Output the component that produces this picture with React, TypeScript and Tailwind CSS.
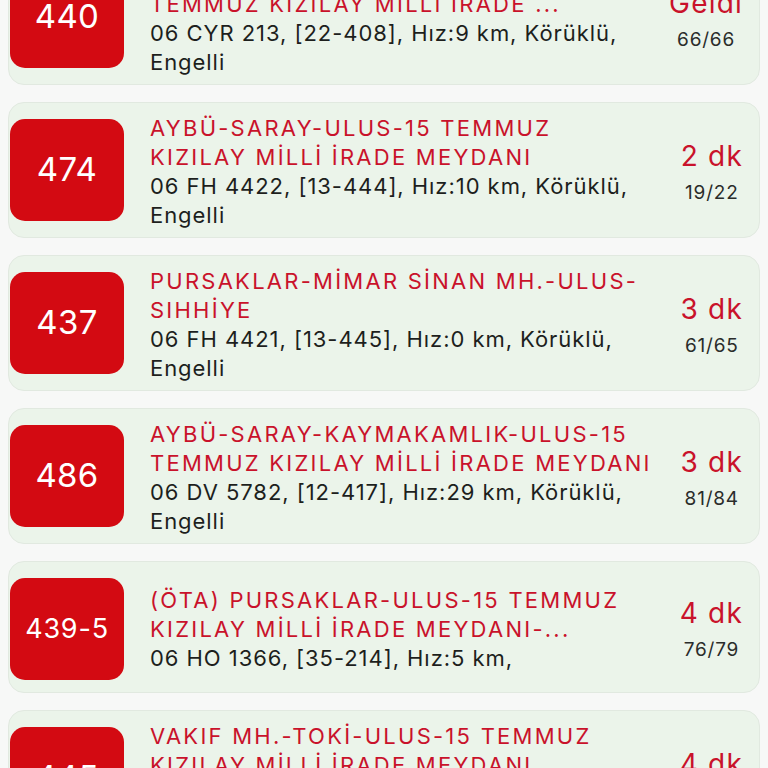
import React from "react";

type Bus = {
  no: string;
  small?: boolean;
  title: string[];
  details: string[];
  eta: string;
  frac: string;
};

const buses: Bus[] = [
  {
    no: "440",
    title: ["ETİMESGUT-BATIKENT-ULUS-15", "TEMMUZ KIZILAY MİLLİ İRADE ..."],
    details: ["06 CYR 213, [22-408], Hız:9 km, Körüklü,", "Engelli"],
    eta: "Geldi",
    frac: "66/66",
  },
  {
    no: "474",
    title: ["AYBÜ-SARAY-ULUS-15 TEMMUZ", "KIZILAY MİLLİ İRADE MEYDANI"],
    details: ["06 FH 4422, [13-444], Hız:10 km, Körüklü,", "Engelli"],
    eta: "2 dk",
    frac: "19/22",
  },
  {
    no: "437",
    title: ["PURSAKLAR-MİMAR SİNAN MH.-ULUS-", "SIHHİYE"],
    details: ["06 FH 4421, [13-445], Hız:0 km, Körüklü,", "Engelli"],
    eta: "3 dk",
    frac: "61/65",
  },
  {
    no: "486",
    title: ["AYBÜ-SARAY-KAYMAKAMLIK-ULUS-15", "TEMMUZ KIZILAY MİLLİ İRADE MEYDANI"],
    details: ["06 DV 5782, [12-417], Hız:29 km, Körüklü,", "Engelli"],
    eta: "3 dk",
    frac: "81/84",
  },
  {
    no: "439-5",
    small: true,
    title: ["(ÖTA) PURSAKLAR-ULUS-15 TEMMUZ", "KIZILAY MİLLİ İRADE MEYDANI-..."],
    details: ["06 HO 1366, [35-214], Hız:5 km,"],
    eta: "4 dk",
    frac: "76/79",
  },
  {
    no: "445",
    title: ["VAKIF MH.-TOKİ-ULUS-15 TEMMUZ", "KIZILAY MİLLİ İRADE MEYDANI"],
    details: ["06 FH 4430, [13-452], Hız:12 km, Körüklü,", "Engelli"],
    eta: "4 dk",
    frac: "70/74",
  },
];

function Card({ b }: { b: Bus }) {
  return (
    <div className="flex items-center rounded-[16px] border border-[#e1e9e0] bg-[#ebf4ea] pt-[11px] pb-[7px] pl-[1px] pr-[16px]">
      <div
        className={
          "my-[5px] flex h-[102px] w-[114px] shrink-0 self-start items-center justify-center rounded-[15px] bg-[#d30a12] text-white " +
          (b.small ? "text-[27px] tracking-[0.03em]" : "text-[33px] tracking-[0.01em]")
        }
      >
        {b.no}
      </div>
      <div className="ml-[26px] flex min-w-0 flex-1 flex-col text-[22px] leading-[29px]">
        {b.title.map((t, i) => (
          <div key={"t" + i} className="whitespace-nowrap tracking-[2.25px] text-[#c9122b]">
            {t}
          </div>
        ))}
        {b.details.map((t, i) => (
          <div key={"d" + i} className="whitespace-nowrap tracking-[0.95px] text-[#1d1f1d]">
            {t}
          </div>
        ))}
      </div>
      <div className="flex shrink-0 flex-col items-center">
        <div className="text-[28px] leading-[34px] tracking-[1.2px] text-[#c9122b]">{b.eta}</div>
        <div className="mt-[8px] text-[19px] leading-[24px] tracking-[0.8px] text-[#2a2c2a]">{b.frac}</div>
      </div>
    </div>
  );
}

export default function App() {
  return (
    <div
      className="h-[768px] w-full overflow-hidden bg-[#f7f8f7]"
      style={{ fontFamily: "Inter, 'Noto Sans', sans-serif" }}
    >
      <div className="-mt-[51px] flex flex-col gap-[17px] px-[8px]">
        {buses.map((b, i) => (
          <Card key={i} b={b} />
        ))}
      </div>
    </div>
  );
}
